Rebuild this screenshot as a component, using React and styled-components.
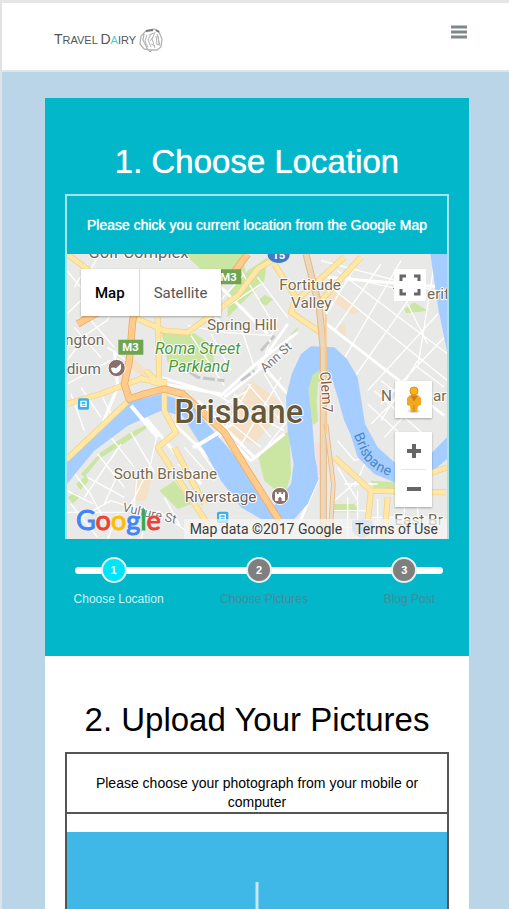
import React from "react";
import styled, { createGlobalStyle, css } from "styled-components";

const GlobalStyle = createGlobalStyle`
  *, *::before, *::after { box-sizing: border-box; }
  body {
    margin: 0;
    background: #b9d5e7;
    color: #000;
    font-family: "Liberation Sans", Arial, sans-serif;
    font-size: 14px;
    line-height: 20px;
  }
`;

const Page = styled.div`
  min-height: 100vh;
  border-top: 3px solid #e6e6e6;
  border-left: 2px solid #dfe3e5;
`;

const Header = styled.header`
  display: flex;
  justify-content: space-between;
  align-items: center;
  height: 69px;
  padding: 0 42px 0 52px;
  background: #fff;
  border-bottom: 2px solid #d9e6ee;
`;

const Brand = styled.a`
  display: flex;
  align-items: center;
  gap: 3px;
  margin-top: 6px;
  color: #555;
  font-family: "Liberation Sans Narrow", "Liberation Sans", sans-serif;
  font-size: 11px;
  text-decoration: none;
  white-space: nowrap;
`;

const BrandInitial = styled.span`
  font-size: 14px;
`;

const BrandAccent = styled.span`
  color: #3fd0e2;
`;

const MenuButton = styled.button`
  display: flex;
  padding: 0;
  margin-bottom: 10px;
  border: 0;
  background: none;
  cursor: pointer;
`;

const Content = styled.main`
  padding: 26px 40px 0 43px;
`;

const Panel = styled.section`
  padding: 40px 20px 0;
  background: ${(p) => (p.$tone === "teal" ? "#02b7ca" : "#fff")};
  color: ${(p) => (p.$tone === "teal" ? "#fff" : "#000")};
  ${(p) =>
    p.$tone === "teal" &&
    css`
      padding-bottom: 47px;
    `}
`;

const Title = styled.h1`
  margin: 0;
  padding-bottom: 8px;
  font-size: 33px;
  font-weight: 400;
  line-height: 48px;
  text-align: center;
  text-shadow: ${(p) => (p.$soft ? "none" : "0 0 1px currentColor")};
`;

const MapBox = styled.div`
  border: 2px solid #a5e4ec;
  border-bottom: 0;
`;

const Instruction = styled.p`
  margin: 0;
  padding: 19px 8px;
  text-align: center;
  text-shadow: 0 0 1px currentColor;
`;

const MapView = styled.div`
  position: relative;
  height: 285px;
  overflow: hidden;
  font-family: Roboto, sans-serif;
`;

const MapArt = styled.svg`
  display: block;
  width: 100%;
  height: 100%;
`;

const MapTypes = styled.div`
  position: absolute;
  top: 15px;
  left: 14px;
  display: flex;
  box-shadow: 0 1px 2px rgba(0, 0, 0, 0.3);
`;

const MapType = styled.button`
  height: 47px;
  padding: 0 14px;
  border: 0;
  background: #fff;
  color: ${(p) => (p.$active ? "#000" : "#565656")};
  font-family: inherit;
  font-size: 15px;
  font-weight: ${(p) => (p.$active ? 500 : 400)};
  cursor: pointer;

  & + & {
    border-left: 1px solid #e0d5c8;
  }
`;

const Control = styled.button`
  display: flex;
  align-items: center;
  justify-content: center;
  width: ${(p) => p.$size}px;
  height: ${(p) => p.$size}px;
  padding: 0;
  border: 0;
  background: #fff;
  cursor: pointer;
`;

const FullscreenSlot = styled.div`
  position: absolute;
  top: 15px;
  right: 21px;
`;

const ControlStack = styled.div`
  position: absolute;
  right: 15px;
  bottom: 32px;
  display: grid;
  gap: 14px;
`;

const ControlGroup = styled.div`
  background: #fff;
  box-shadow: 0 1px 2px rgba(0, 0, 0, 0.3);
`;

const ControlRule = styled.div`
  height: 1px;
  margin: 0 6px;
  background: #e6e6e6;
`;

const GoogleLogo = styled.a`
  position: absolute;
  left: 9px;
  bottom: 3px;
  font-family: Lato, sans-serif;
  font-size: 27px;
  line-height: 32px;
  text-decoration: none;
  -webkit-text-stroke: 1px currentColor;
  text-shadow: 0 0 2px #fff;
`;

const Letter = styled.span`
  color: ${(p) => p.$color};
`;

const Credits = styled.div`
  position: absolute;
  right: 0;
  bottom: 0;
  display: flex;
  gap: 13px;
  padding: 0 9px 0 6px;
  background: rgba(245, 245, 245, 0.7);
  color: #3c3c3c;
  font-size: 14px;

  a { color: inherit; text-decoration: none; }
`;

const Steps = styled.ol`
  display: grid;
  grid-template-columns: minmax(0, 77fr) minmax(0, 213fr) minmax(0, 77fr);
  margin: 18px 6px 0 10px;
  padding: 0;
  list-style: none;
  position: relative;

  &::before {
    content: "";
    position: absolute;
    top: 10px;
    left: 0;
    right: 0;
    height: 7px;
    border-radius: 4px;
    background: #fff;
  }
`;

const Step = styled.li`
  display: flex;
  flex-direction: column;
  align-items: center;
  gap: 6px;
  color: ${(p) => (p.$active ? "#c9f3f6" : "#3f8e99")};
  font-size: 12px;
  white-space: nowrap;
`;

const StepDot = styled.span`
  position: relative;
  width: 26px;
  height: 26px;
  border: 2px solid #e6eeee;
  border-radius: 50%;
  background: ${(p) => (p.$active ? "#00e5fb" : "#7f7f7f")};
  color: #fff;
  font-size: 11px;
  font-weight: 700;
  line-height: 22px;
  text-align: center;
`;

const StepLabel = styled.span`
  padding-left: 10px;
`;

const UploadBox = styled.div`
  border: 2px solid #555;
`;

const UploadNote = styled.p`
  margin: 0 0 18px;
  padding: 20px 20px 0;
  border-bottom: 2px solid #555;
  line-height: 19px;
  text-align: center;
`;

const DropZone = styled.label`
  display: flex;
  justify-content: center;
  padding: 50px 0;
  background: #3fb7e7;
  cursor: pointer;
`;

const HiddenInput = styled.input`
  position: absolute;
  width: 1px;
  height: 1px;
  opacity: 0;
`;

const CameraMark = () => (
  <svg width="24" height="26" viewBox="0 0 24 26" fill="none" stroke="#b4b4b4" aria-hidden="true">
    <path d="M7 4 2 9 1 17l4 5 5 1M5 7l-1 6 3 6M7 4l8-2 5 3 3 7-1 8-4 3H9l-2-4" strokeWidth="1.3" />
    <path d="M7 4l7-1M17 3l3 2" stroke="#777" strokeWidth="2" />
    <path d="M8 8 6 14l3 6M12 7l-3 6 3 7M16 5l-3 7 3 9M18 7l3 12M10 8l5-2M11 14l3-4M12 17l4 2" strokeWidth="1" />
    <path d="m17 9 1 9 2-1-1-8M9 23l2 2 2-2" strokeWidth="1" />
  </svg>
);

const roads = {
  minor:
    "M18 190 90 120 150 60M60 60l120 100M18 60l90 110M80 40l-40 70M110 20 70 90M18 330l60-80 60-40 40-90M40 230l80 90M90 210l70 80M140 290l70 50M18 400l130-70M30 430l40 110M60 410l60 90M120 430l40 80" +
    "M18 785h180l70-140 20-90M60 800l90-50 120 40M70 740l110-160M80 680l110 60M18 640l70 90 60 110M110 610l80 100M210 545l70 120M180 650l-50 110M230 660l-20 200M150 560l70 90M18 720l80 40M30 760l80 100M170 790l-30 75M260 790l-20 75M310 740l50 90M290 780l100 70" +
    "M380 225l110 20 140 10M390 255l100 150M390 250l70-80 90-100M450 250l60 110M540 60l110 180M590 80l90 120M480 180l120-80M430 170l80 70M540 230l40 120M650 200l-50 150" +
    "M780 30l380 100M860 80l260 60M900 20l-110 180M960 40 820 240M1020 30 840 340M1090 80 880 380M1130 190 920 420M1150 260 960 460M1070 330 960 510M830 60l330 250M810 110l350 280M1040 160l60 120M1120 40l-50 310 80 60" +
    "M940 420l170 150M920 460l120 110M960 390l130 100M1020 430l-90 90M1090 430 970 560M960 350l140 100" +
    "M830 570l50 60 80-30M850 700h100M830 650l60 100M870 540l60 110M920 620l-40 90M820 750l80-70M820 830h100M860 740v125M890 720v140M820 780h110M950 745v110M980 740v110M930 800h200M1030 740v115M1070 760v95" +
    "M600 590l-100-80M630 560 520 430M670 520 560 400M470 570l100-170M530 600l130-220M590 620l90-110M440 490l120-70M610 370l60 100M480 440l190 100M370 590l90 100M350 640l70 60M410 590l110 150",
  white:
    "M215 455 420 700M300 380l180 55 110-100 120-90M310 400l170 30M160 300l10 110-50 120M395 590l120-70M430 490l140 140 100-80M790 215l360 280M780 660l-70 170M490 440 690 280M410 450l170 170M600 340l80 90M590 350l90-130M340 520l280 270M440 70l180 180M800 80l350 30",
  main:
    "M18 625l180-170M18 460l100-30 120-45 80 10M255 360l40 40M290 200l5 200-60-20M220 200l90 40 70 5 150-110 60-80 50-30M220 110l40 80M18 10l80 60M640 40l65 100-15 45 95 65M850 20 705 150M900 20 770 160M310 400v80l35 65-55 45 150 230M340 590l90 170M820 620l110 100 225 5M930 720l-15 145M980 740l-10 125M1100 670l58-20",
  freeway:
    "M240 110 215 210 205 330 190 400 205 445 250 430 310 415 365 430 420 480 490 545 560 660 655 810M50 220l70-40M560 10l-60 80",
};

const MapDrawing = () => (
  <MapArt viewBox="18 10 1140 855" preserveAspectRatio="xMidYMid slice" role="img" aria-label="Map of Brisbane">
    <rect x="-500" y="-200" width="2200" height="1300" fill="#e9e9e8" />
    <g fill="#cbe6a3">
      <path d="M370 10h175l10 65-130-15zM500 130l60-70 60-40-10 70-110 110zM300 235l95 10 60 40 5 60-90 20-50-30zM590 610l95-70 5 130-20 70-60-50zM295 720l45-30 50 70-40 15zM590 150l22-18 24 14-22 20zM1030 175l30-20 40 25-65 8zM810 760h70l15 25h-80zM930 690l70 5v30l-60-8zM690 250l22-22-8 30zM20 740l22-15 12 16-18 18zM45 700l30-25 8 15-25 28z" />
      <path d="M60 670l60-65 80-55 60-30-5 14-60 40-80 50-45 55z" />
    </g>
    <g fill="#f7ddbd">
      <path d="m510 470 60-80 100 70-20 40-70 80-110-40zM790 100l50 30 60 50-25 12-90-60zM830 230l20-15 5 40-20-5zM220 700l35-50 20 20-20 80h-35zM200 310l60 50-18 15-60-40z" opacity=".75" />
    </g>
    <path d="m370 520 45 30 180 230-50-30-190-210z" fill="#ece9df" />
    <g fill="none" stroke="#fff" strokeLinejoin="round">
      <path d={roads.minor} strokeWidth="4" />
      <path d={roads.white} strokeWidth="9" />
    </g>
    <path d="M540 390l40-30M600 300l40-45M350 340l60 40 80 10" stroke="#c6c6c6" strokeWidth="9" strokeDasharray="36 8" fill="none" />
    <g fill="#a5cdff">
      <path d="M18 635 100 545 195 455 300 430 400 460 430 510 500 590 590 700 640 765 690 700 698 640 680 540 675 440 692 370 720 310 750 287 820 290 858 325 890 380 912 520 950 590 1000 635 1080 640 1158 560V625l-58 50-100 20-60-25-50-50-22-70-18-40-20-70-15-50-30-35-30 20-10 45 5 50 12 150 13 60-35 80-40 45H600l-60-35-60-80-50-90-65-105-65-15-100 45-100 75-50 60-32 40z" />
      <path d="M1108 10h50v290l-25-120z" />
    </g>
    <path d="M755 372l30-20 8 25-22 20-4 55 4 60-16 12-8-60-5-50z" fill="#cbe6a3" />
    <path d="M762 580l14-5 10 80-15 30z" fill="#f6dedd" />
    <path d="M210 465l80 95M400 590l90-55" stroke="#fff" strokeWidth="12" />
    <g fill="none" strokeLinejoin="round">
      <path d={roads.main} stroke="#f2cf7d" strokeWidth="18" />
      <path d={roads.main} stroke="#ffe7a7" strokeWidth="14" />
      <path d={roads.freeway} stroke="#e9ac69" strokeWidth="22" />
      <path d={roads.freeway} stroke="#ffcb8b" strokeWidth="17" />
      <path d="M735 10l40 160 12 130v565" stroke="#e9b77d" strokeWidth="21" />
      <path d="M735 10l40 160 12 130v565" stroke="#ead7bd" strokeWidth="15" />
      <path d="M795 520l22 180-10 165" stroke="#e9b77d" strokeWidth="14" />
      <path d="M795 520l22 180-10 165" stroke="#efdcc4" strokeWidth="9" />
      <path d="M794 190v360" stroke="#f9ca8e" strokeWidth="6" />
    </g>
    <g fontFamily="Roboto, sans-serif" stroke="#fff" strokeWidth="6" paintOrder="stroke" strokeLinejoin="round">
      <g fontSize="46" fill="#76694f">
        <text x="655" y="118">Fortitude</text>
        <text x="690" y="171">Valley</text>
        <text x="438" y="238">Spring Hill</text>
        <text x="158" y="684">South Brisbane</text>
        <text x="12" y="284">ngton</text>
        <text x="960" y="452">N</text>
        <text x="1116" y="452">ar</text>
        <text x="995" y="145">T</text>
        <text x="1098" y="145">erif</text>
        <text x="1000" y="824">East Br</text>
      </g>
      <g fontSize="46" fill="#666">
        <text x="82" y="22" fontSize="50">Golf Complex</text>
        <text x="17" y="370">dium</text>
        <text x="371" y="753" fill="#6b5d58">Riverstage</text>
      </g>
      <g fontSize="48" fill="#4a9740" fontStyle="italic">
        <text x="282" y="311">Roma Street</text>
        <text x="322" y="365">Parkland</text>
      </g>
      <text x="340" y="516" fontSize="98" fontWeight="500" fill="#67583a">Brisbane</text>
      <g fontSize="38" fill="#777">
        <text transform="translate(612 366) rotate(-42)">Ann St</text>
        <text transform="translate(183 782) rotate(13)">Vulture St</text>
      </g>
      <text transform="translate(777 364) rotate(86)" fontSize="43" fill="#8b5c42">Clem7</text>
      <g fontSize="42" fill="#4b86c8" stroke="#a5cdff">
        <text transform="translate(878 553) rotate(67)">Bris</text>
        <text transform="translate(906 622) rotate(42)">ba</text>
        <text transform="translate(943 657) rotate(25)">ne</text>
      </g>
    </g>
    <g fontFamily="Roboto, sans-serif" fontWeight="700" fontSize="34" fill="#fff">
      <path d="M172 267h75v45h-75zM466 56h75v45h-75z" fill="#6fa550" />
      <text x="184" y="302">M3</text>
      <text x="478" y="91">M3</text>
      <path d="M620 0h66v12c0 14-14 24-32 25-20-1-34-11-34-25z" fill="#3f7cc7" />
      <text x="634" y="24">15</text>
    </g>
    <g fill="#8a706c" stroke="#fff" strokeWidth="3">
      <circle cx="167" cy="352" r="26" />
      <circle cx="657" cy="736" r="26" />
    </g>
    <path d="M150 352q8-4 15 1l15-14v15q-6 14-20 14-9-4-10-16zM642 737v-12h6v5h5v-5h8v5h5v-5h6v26h-10v-8q-5-8-10 0v8h-10z" fill="#fff" />
    <path d="M873 810l30-4 32 4v28q-12 20-32 25-22-7-30-25z" fill="#a9c0e4" />
    <g fill="#3bb0ee">
      <rect x="51" y="443" width="33" height="34" rx="5" />
      <rect x="468" y="783" width="34" height="34" rx="5" />
    </g>
    <path d="M60 452h15v15H60zM477 792h16v15h-16z" fill="none" stroke="#fff" strokeWidth="4" />
    <path d="M58 461h19M475 801h20" stroke="#fff" strokeWidth="3" />
  </MapArt>
);

const FullscreenIcon = () => (
  <svg width="22" height="22" viewBox="0 0 22 22" fill="none" stroke="#666" strokeWidth="3" aria-hidden="true">
    <path d="M2 7V2h5M15 2h5v5M20 15v5h-5M7 20H2v-5" />
  </svg>
);

const Pegman = () => (
  <svg width="18" height="28" viewBox="0 0 18 28" aria-hidden="true">
    <ellipse cx="9" cy="25" rx="6" ry="2" fill="#ddd" />
    <path d="M5 9h8l3 3v7l-3 1-1 6H6l-1-6-3-1v-7z" fill="#f4a91c" />
    <path d="M6 10l3 5 3-5zM9 19v7" fill="#e56d20" stroke="#cf861c" />
    <circle cx="9" cy="5" r="4" fill="#fbb215" stroke="#d99213" />
  </svg>
);

const ZoomIcon = ({ plus }) => (
  <svg width="16" height="16" viewBox="0 0 16 16" stroke="#666" strokeWidth="4" aria-hidden="true">
    <path d={plus ? "M1 8h14M8 1v14" : "M1 8h14"} />
  </svg>
);

const googleLetters = [
  ["G", "#4285f4"],
  ["o", "#ea4335"],
  ["o", "#fbbc05"],
  ["g", "#4285f4"],
  ["l", "#34a853"],
  ["e", "#ea4335"],
];

const steps = ["Choose Location", "Choose Pictures", "Blog Post"];

export default function App() {
  return (
    <Page>
      <GlobalStyle />
      <Header>
        <Brand href="#home">
          <span>
            <BrandInitial>T</BrandInitial>RAVEL <BrandInitial>D</BrandInitial>
            <BrandAccent>A</BrandAccent>IRY
          </span>
          <CameraMark />
        </Brand>
        <MenuButton type="button" aria-label="Menu">
          <svg width="16" height="14" viewBox="0 0 16 14" stroke="#7f8789" strokeWidth="3">
            <path d="M0 2h16M0 7h16M0 12h16" />
          </svg>
        </MenuButton>
      </Header>
      <Content>
        <Panel $tone="teal">
          <Title>1. Choose Location</Title>
          <MapBox>
            <Instruction>Please chick you current location from the Google Map</Instruction>
            <MapView>
              <MapDrawing />
              <MapTypes>
                <MapType type="button" $active>Map</MapType>
                <MapType type="button">Satellite</MapType>
              </MapTypes>
              <FullscreenSlot>
                <Control type="button" $size={32} aria-label="Full screen"><FullscreenIcon /></Control>
              </FullscreenSlot>
              <ControlStack>
                <ControlGroup>
                  <Control type="button" $size={37} aria-label="Street view"><Pegman /></Control>
                </ControlGroup>
                <ControlGroup>
                  <Control type="button" $size={37} aria-label="Zoom in"><ZoomIcon plus /></Control>
                  <ControlRule />
                  <Control type="button" $size={37} aria-label="Zoom out"><ZoomIcon /></Control>
                </ControlGroup>
              </ControlStack>
              <Credits>
                <span>Map data ©2017 Google</span>
                <a href="#terms">Terms of Use</a>
              </Credits>
              <GoogleLogo href="#google" aria-label="Google">
                {googleLetters.map(([char, color], i) => (
                  <Letter key={i} $color={color}>{char}</Letter>
                ))}
              </GoogleLogo>
            </MapView>
          </MapBox>
          <Steps>
            {steps.map((name, i) => (
              <Step key={name} $active={i === 0}>
                <StepDot $active={i === 0}>{i + 1}</StepDot>
                <StepLabel>{name}</StepLabel>
              </Step>
            ))}
          </Steps>
        </Panel>
        <Panel>
          <Title as="h2" $soft>2. Upload Your Pictures</Title>
          <UploadBox>
            <UploadNote>Please choose your photograph from your mobile or computer</UploadNote>
            <DropZone>
              <HiddenInput type="file" accept="image/*" aria-label="Choose a photograph" />
              <svg width="120" height="120" viewBox="0 0 120 120" stroke="#c5e9f8" strokeWidth="3" aria-hidden="true">
                <path d="M60 0v120M0 60h120" />
              </svg>
            </DropZone>
          </UploadBox>
        </Panel>
      </Content>
    </Page>
  );
}
